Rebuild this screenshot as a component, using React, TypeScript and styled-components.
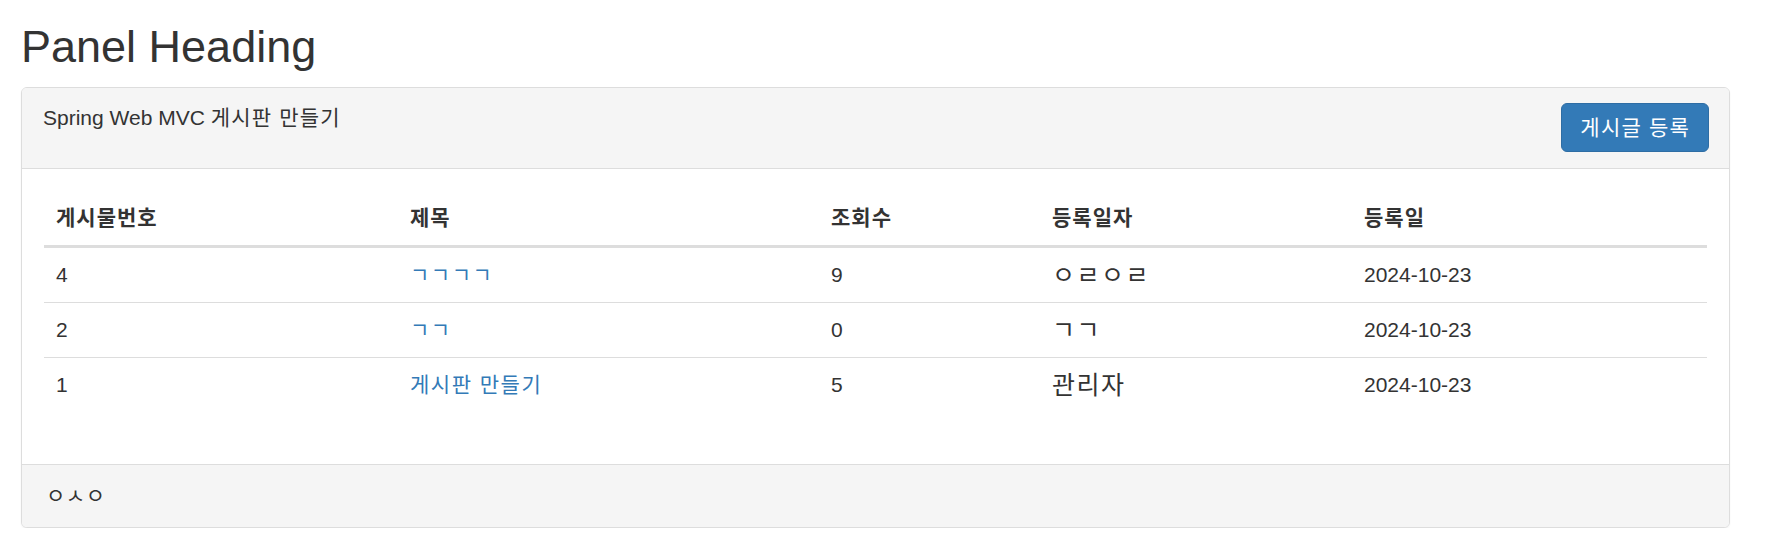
import styled, { createGlobalStyle } from 'styled-components';

const GlobalStyle = createGlobalStyle`
    html, body {
        margin: 0;
        padding: 0;
        background: #fff;
    }
    body {
        font-family: "Liberation Sans", Arial, "Noto Sans CJK KR", sans-serif;
        font-size: 21px;
        line-height: 1.42857;
        color: #333;
    }
`;

const Page = styled.div`
    padding: 0 36px 0 21px;
`;

const Title = styled.h1`
    margin: 22px 0 15px;
    font-size: 45px;
    font-weight: 400;
    line-height: 1.1;
    color: #333;
`;

const Panel = styled.div`
    border: 1px solid #ddd;
    border-radius: 6px;
    background: #fff;
    box-shadow: 0 1px 2px rgba(0, 0, 0, 0.06);
    overflow: hidden;
`;

const PanelHeading = styled.div`
    display: flex;
    justify-content: space-between;
    align-items: flex-start;
    padding: 15px 20px 16px 21px;
    background: #f5f5f5;
    border-bottom: 1px solid #ddd;
`;

const HeadingText = styled.span`
    line-height: 30px;
`;

// Hangul in the reference is a touch wider than Noto's, so open it up a little
const Ko = styled.span<{ $spread?: number; $size?: number }>`
    letter-spacing: ${({ $spread }) => $spread ?? 1.2}px;
    font-size: ${({ $size }) => ($size ? `${$size}px` : 'inherit')};
    line-height: 30px;
    vertical-align: top;
`;

const PrimaryButton = styled.button`
    font-family: inherit;
    font-size: 21px;
    line-height: 29px;
    letter-spacing: 1.2px;
    padding: 9px 18px;
    color: #fff;
    background: #337ab7;
    border: 1px solid #2e6da4;
    border-radius: 6px;
    cursor: pointer;

    &:hover {
        background: #286090;
    }
`;

const PanelBody = styled.div`
    padding: 22px;
`;

const Table = styled.table`
    width: 100%;
    border-collapse: collapse;
    border-spacing: 0;
    table-layout: fixed;
    margin-bottom: 30px;
`;

const Th = styled.th<{ $width?: number }>`
    width: ${({ $width }) => ($width ? `${$width}px` : 'auto')};
    text-align: left;
    font-weight: 700;
    letter-spacing: 1px;
    padding: 12px;
    line-height: 30px;
    vertical-align: bottom;
    border-bottom: 3px solid #ddd;
`;

const Td = styled.td`
    padding: 12px;
    height: 30px;
    line-height: 30px;
    vertical-align: top;
    border-top: 1px solid #ddd;
`;

const TitleLink = styled.a`
    color: #337ab7;
    text-decoration: none;

    &:hover {
        color: #23527c;
        text-decoration: underline;
    }
`;

const PanelFooter = styled.div`
    padding: 16px 22px 16px 24px;
    line-height: 30px;
    background: #f5f5f5;
    border-top: 1px solid #ddd;
`;

const posts = [
    { no: 4, title: 'ㄱㄱㄱㄱ', views: 9, writer: 'ㅇㄹㅇㄹ', date: '2024-10-23' },
    { no: 2, title: 'ㄱㄱ', views: 0, writer: 'ㄱㄱ', date: '2024-10-23' },
    { no: 1, title: '게시판 만들기', views: 5, writer: '관리자', date: '2024-10-23' },
];

const App = () => {
    return (
        <>
            <GlobalStyle />
            <Page>
                <Title>Panel Heading</Title>
                <Panel>
                    <PanelHeading>
                        <HeadingText>
                            Spring Web MVC <Ko>게시판 만들기</Ko>
                        </HeadingText>
                        <PrimaryButton type="button">게시글 등록</PrimaryButton>
                    </PanelHeading>
                    <PanelBody>
                        <Table>
                            <thead>
                                <tr>
                                    <Th $width={330}>게시물번호</Th>
                                    <Th $width={397}>제목</Th>
                                    <Th $width={197}>조회수</Th>
                                    <Th $width={288}>등록일자</Th>
                                    <Th>등록일</Th>
                                </tr>
                            </thead>
                            <tbody>
                                {posts.map((post) => (
                                    <tr key={post.no}>
                                        <Td>{post.no}</Td>
                                        <Td>
                                            <TitleLink href="#">
                                                <Ko $spread={1.5}>{post.title}</Ko>
                                            </TitleLink>
                                        </Td>
                                        <Td>{post.views}</Td>
                                        <Td>
                                            <Ko $spread={1.5} $size={25}>{post.writer}</Ko>
                                        </Td>
                                        <Td>{post.date}</Td>
                                    </tr>
                                ))}
                            </tbody>
                        </Table>
                    </PanelBody>
                    <PanelFooter>
                        <Ko $spread={0.5}>ㅇㅅㅇ</Ko>
                    </PanelFooter>
                </Panel>
            </Page>
        </>
    );
};

export default App;
